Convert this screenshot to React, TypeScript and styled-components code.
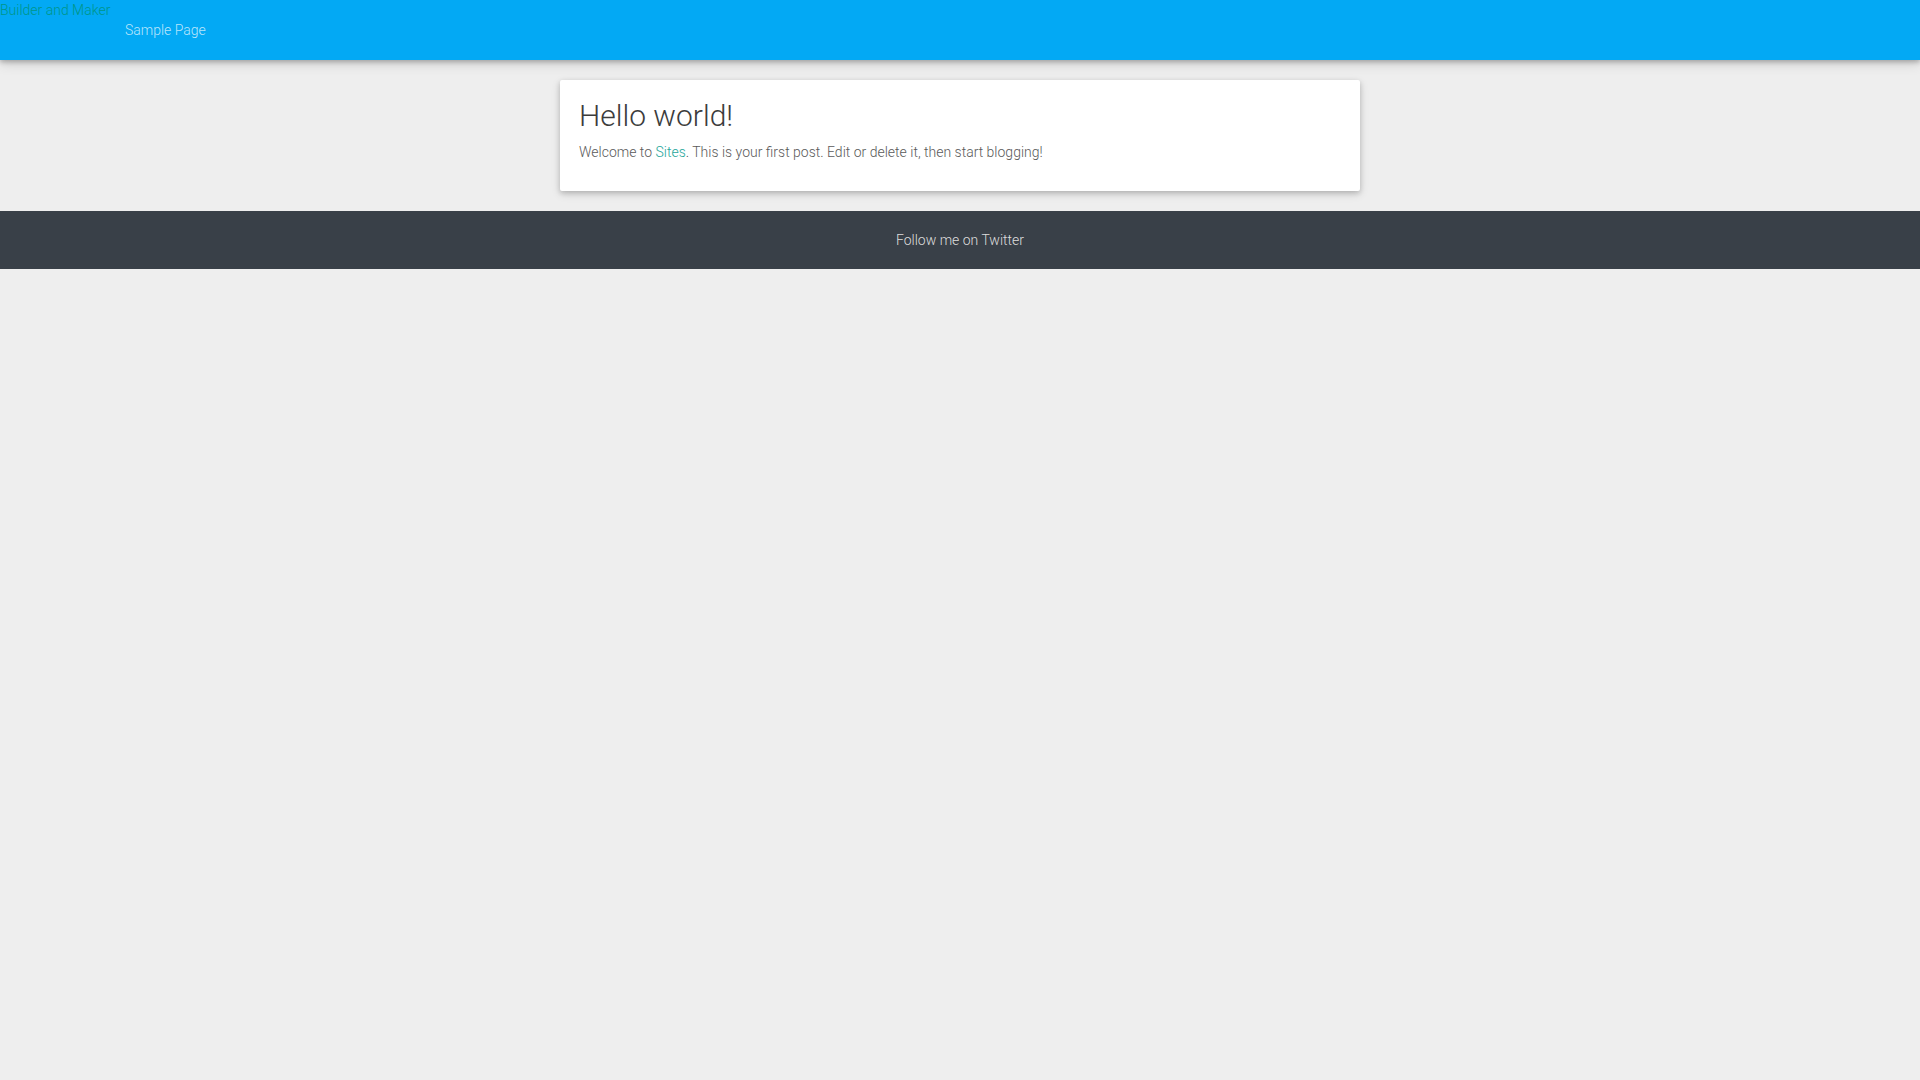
import React from 'react';
import styled, { createGlobalStyle } from 'styled-components';

const GlobalStyle = createGlobalStyle`
  html,
  body {
    margin: 0;
    padding: 0;
    background: #eeeeee;
    font-family: 'Roboto Light', Roboto, 'Noto Sans', 'Liberation Sans', sans-serif;
    font-weight: 300;
  }

  a {
    text-decoration: none;
  }
`;

const Page = styled.div`
  min-height: 1080px;
  background: #eeeeee;
  display: flex;
  flex-direction: column;
`;

const Header = styled.header`
  height: 60px;
  background: #03a9f4;
  box-shadow: 0 2px 5px rgba(0, 0, 0, 0.26), 0 4px 12px rgba(0, 0, 0, 0.12);
  position: relative;
  z-index: 2;
`;

const Brand = styled.a`
  display: block;
  width: max-content;
  font-size: 14px;
  line-height: 20px;
  color: #00968a;
`;

const Nav = styled.ul`
  list-style: none;
  margin: 0;
  padding: 0 0 0 125px;
  display: flex;
`;

const NavLink = styled.a`
  font-size: 14px;
  line-height: 20px;
  color: rgba(255, 255, 255, 0.72);
`;

const Main = styled.main`
  padding-top: 20px;
  display: flex;
  justify-content: center;
`;

const Card = styled.article`
  width: 800px;
  box-sizing: border-box;
  padding: 19px 20px 28px 19px;
  background: #ffffff;
  border-radius: 2px;
  box-shadow: 0 2px 5px rgba(0, 0, 0, 0.16), 0 3px 10px rgba(0, 0, 0, 0.14);
`;

const Title = styled.h2`
  margin: 0 0 9px;
  font-size: 30px;
  line-height: 33px;
  font-weight: 300;
  color: #3c3c3c;
`;

const Excerpt = styled.p`
  margin: 0;
  font-size: 14px;
  line-height: 22px;
  color: #5a5a5a;

  a {
    color: #26a69a;
  }
`;

const Footer = styled.footer`
  margin-top: 20px;
  height: 58px;
  background: #394048;
  display: flex;
  align-items: center;
  justify-content: center;
`;

const FooterLink = styled.a`
  font-size: 14px;
  color: #dddddd;
`;

export default function App() {
  return (
    <Page>
      <GlobalStyle />
      <Header>
        <Brand href="#">Builder and Maker</Brand>
        <Nav>
          <li>
            <NavLink href="#">Sample Page</NavLink>
          </li>
        </Nav>
      </Header>
      <Main>
        <Card>
          <Title>Hello world!</Title>
          <Excerpt>
            Welcome to <a href="#">Sites</a>. This is your first post. Edit or delete it, then start
            blogging!
          </Excerpt>
        </Card>
      </Main>
      <Footer>
        <FooterLink href="#">Follow me on Twitter</FooterLink>
      </Footer>
    </Page>
  );
}
